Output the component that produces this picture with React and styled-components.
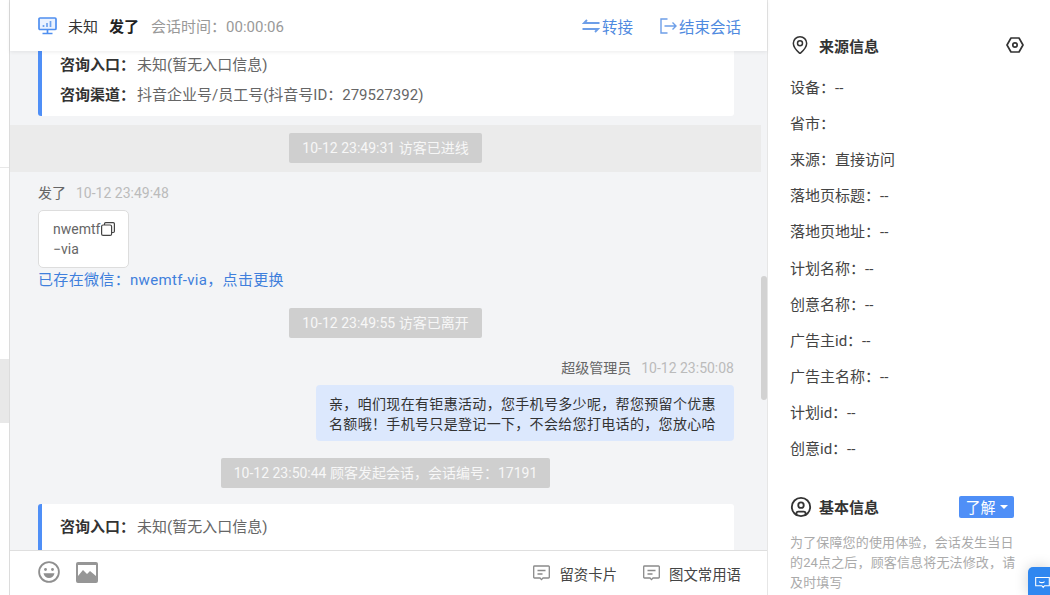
import React from "react";
import styled, { createGlobalStyle } from "styled-components";
import { MapPin, CircleUser } from "lucide-react";

const GlobalStyle = createGlobalStyle`
  html, body {
    margin: 0;
    padding: 0;
    background: #fff;
  }
  * {
    box-sizing: border-box;
  }
  body {
    font-family: Roboto, "Noto Sans CJK SC", sans-serif;
    color: #333;
  }
`;

const sourceRows = [
  "设备：--",
  "省市：",
  "来源：直接访问",
  "落地页标题：--",
  "落地页地址：--",
  "计划名称：--",
  "创意名称：--",
  "广告主id：--",
  "广告主名称：--",
  "计划id：--",
  "创意id：--",
];

const MonitorIcon = () => (
  <svg width="19" height="18" viewBox="0 0 19 18" fill="none">
    <rect x="1" y="1" width="17" height="11.5" rx="1" fill="#eaf2ff" stroke="#4f8ff0" strokeWidth="1.7" />
    <path d="M5.5 10V8M9 10V6M12.500 10V4" stroke="#6fa3ee" strokeWidth="1.7" />
    <path d="M9.5 13v3M4.5 16.500h10" stroke="#4f8ff0" strokeWidth="1.7" />
  </svg>
);

const SwapIcon = () => (
  <svg width="18" height="14" viewBox="0 0 18 14" fill="none" stroke="#6d9ee8" strokeWidth="1.9">
    <path d="M17.500 4H2L5 1" />
    <path d="M.5 10H16L13 13" />
  </svg>
);

const ExitIcon = () => (
  <svg width="17" height="16" viewBox="0 0 17 16" fill="none" stroke="#6d9ee8" strokeWidth="1.4">
    <path d="M7.500 1H1v14h6.500" />
    <path d="M4.500 8H16M12.500 4.500 16 8l-3.500 3.500" />
  </svg>
);

const HexIcon = () => (
  <svg width="18" height="16" viewBox="0 0 18 16" fill="none" stroke="#333" strokeWidth="1.7">
    <path d="M5 1h8l4 7-4 7H5L1 8z" strokeLinejoin="round" />
    <circle cx="9" cy="8" r="2.2" />
  </svg>
);

const SmileIcon = () => (
  <svg width="22" height="22" viewBox="0 0 22 22" fill="none">
    <circle cx="11" cy="11" r="9.900" stroke="#8f8f8f" strokeWidth="1.800" />
    <circle cx="7.500" cy="8.500" r="1.400" fill="#8f8f8f" />
    <circle cx="14.500" cy="8.500" r="1.400" fill="#8f8f8f" />
    <path d="M5.500 12.200h11c-.5 3-2.800 4.800-5.500 4.800s-5-1.800-5.500-4.800z" fill="#8f8f8f" />
  </svg>
);

const PictureIcon = () => (
  <svg width="22" height="21" viewBox="0 0 22 21">
    <path
      d="M2 0h18a2 2 0 0 1 2 2v17a2 2 0 0 1-2 2H2a2 2 0 0 1-2-2V2a2 2 0 0 1 2-2zm0 14 5-6 4 4 3-3 6 5V3H2z"
      fill="#969696"
      fillRule="evenodd"
    />
  </svg>
);

const CommentIcon = () => (
  <svg width="17" height="16" viewBox="0 0 17 16" fill="none" stroke="#8a8a8a" strokeWidth="1.300">
    <path d="M1.500 1h14a.8.8 0 0 1 .8.8v10.400a.8.8 0 0 1-.8.8H10l-1.500 1.600L7 13H1.500a.8.8 0 0 1-.8-.8V1.800a.8.8 0 0 1 .8-.8z" />
    <path d="M4.500 5.500h8M4.500 9h5" />
  </svg>
);

const CopyIcon = () => (
  <svg width="14" height="14" viewBox="0 0 14 14" fill="none" stroke="#444" strokeWidth="1.200">
    <rect x="0.600" y="3" width="10" height="10.400" rx="1.500" />
    <path d="M3.500 3V1.800A1.200 1.200 0 0 1 4.700.6h7.500a1.200 1.200 0 0 1 1.200 1.200v7.500a1.200 1.200 0 0 1-1.200 1.200h-1.600" />
  </svg>
);

const ChatIcon = () => (
  <svg width="22" height="18" viewBox="0 0 22 18" fill="none" stroke="#fff" strokeWidth="1.600">
    <path d="M1 1h20v12h-7l-2 2.500L10 13H1z" />
    <path d="M6 7c2 2 6 2 8 0" />
  </svg>
);

const Page = styled.div`
  position: relative;
  display: flex;
  width: 1050px;
  height: 595px;
  overflow: hidden;
  background: #fff;
`;

const LeftStrip = styled.div`
  flex: none;
  width: 10px;
  border-right: 1px solid #dcdcdc;
`;

const StripLine = styled.div`
  height: 168px;
  border-bottom: 1px solid #e8e8e8;
`;

const StripBlock = styled.div`
  height: 64px;
  margin-top: 191px;
  background: #e8e8e8;
`;

const Main = styled.div`
  flex: none;
  display: flex;
  flex-direction: column;
  width: 758px;
  height: 595px;
  border-right: 1px solid #e6e6e6;
`;

const Header = styled.header`
  position: relative;
  z-index: 2;
  flex: none;
  display: flex;
  align-items: center;
  justify-content: space-between;
  height: 51px;
  padding: 0 26px 0 28px;
  background: #fff;
  box-shadow: 0 1px 4px rgba(0, 0, 0, 0.08);
  font-size: 15px;
`;

const HeaderGroup = styled.div`
  display: flex;
  align-items: center;
`;

const Visitor = styled.span`
  margin-left: 11px;
  color: #333;
`;

const VisitorName = styled.b`
  margin-left: 11px;
  color: #222;
`;

const Duration = styled.span`
  margin-left: 12px;
  color: #999;
`;

const HeaderAction = styled.a`
  display: flex;
  align-items: center;
  gap: 2px;
  margin-left: 27px;
  font-size: 15.5px;
  color: #4f8ae0;
`;

const Body = styled.div`
  position: relative;
  flex: 1;
  min-height: 0;
  overflow: hidden;
  background: #f3f4f6;
`;

const Thread = styled.div`
  display: flex;
  flex-direction: column;
  width: 751px;
  margin-top: -9px;
`;

const InfoCard = styled.div`
  flex: none;
  margin: ${({ $gap }) => $gap}px 27px 0 28px;
  padding: 8px 0 ${({ $bottom }) => $bottom}px 18px;
  background: #fff;
  border-left: 4px solid #4f8ff7;
  border-radius: 3px;
`;

const InfoRow = styled.div`
  height: 30px;
  line-height: 30px;
  font-size: 15px;
  color: #666;

  b {
    margin-right: 2px;
    color: #333;
  }
`;

const Band = styled.div`
  display: flex;
  justify-content: center;
  align-items: flex-start;
  height: 47px;
  margin-top: 9px;
  padding-top: 8px;
  background: ${({ $shaded }) => ($shaded ? "#ebebeb" : "transparent")};
`;

const Chip = styled.div`
  height: 30px;
  line-height: 30px;
  padding: 0 13px;
  background: #cfcfcf;
  border-radius: 2px;
  font-size: 14px;
  color: #f7f7f7;
`;

const Meta = styled.div`
  display: flex;
  justify-content: ${({ $right }) => ($right ? "flex-end" : "flex-start")};
  gap: 10px;
  margin: 12px 27px 0 28px;
  line-height: 18px;
  font-size: 14px;
  color: #666;

  span {
    color: #bbb;
  }
`;

const WechatCard = styled.div`
  position: relative;
  width: 91px;
  height: 58px;
  margin: 8px 0 0 28px;
  padding: 9px 0 0 14px;
  background: #fff;
  border: 1px solid #ddd;
  border-radius: 5px;
  font-size: 14px;
  line-height: 19.5px;
  color: #666;
`;

const CopyMark = styled.span`
  position: absolute;
  top: 11px;
  left: 62px;
  line-height: 0;
`;

const WechatLink = styled.a`
  margin: 2px 0 0 28px;
  line-height: 21px;
  font-size: 15px;
  letter-spacing: 0.33px;
  color: #3f7fdc;
`;

const BubbleRow = styled.div`
  display: flex;
  justify-content: flex-end;
  margin: 8px 27px 0 0;
`;

const Bubble = styled.div`
  width: 418px;
  height: 56px;
  padding: 10px 0 0 13px;
  background: #dce8fd;
  border-radius: 4px;
  font-size: 14px;
  line-height: 19.5px;
  letter-spacing: 0.33px;
  color: #333;
`;

const ScrollThumb = styled.div`
  position: absolute;
  top: 225px;
  right: 0;
  width: 6px;
  height: 124px;
  background: #d2d2d2;
  border-radius: 3px;
`;

const Footer = styled.footer`
  flex: none;
  display: flex;
  align-items: center;
  justify-content: space-between;
  height: 45px;
  padding: 0 26px 2px 28px;
  background: #fff;
  border-top: 1px solid #dfdfdf;
`;

const FooterIcons = styled.div`
  display: flex;
  align-items: center;
  gap: 16px;
  line-height: 0;
`;

const FooterTools = styled.div`
  display: flex;
  gap: 26px;
  padding-top: 2px;
`;

const FooterTool = styled.a`
  display: flex;
  align-items: center;
  gap: 9px;
  font-size: 14.4px;
  color: #444;
`;

const Side = styled.aside`
  flex: 1;
  min-width: 0;
  padding: 29px 36px 0 22px;
  overflow: hidden;
`;

const SideTitleRow = styled.div`
  display: flex;
  align-items: center;
  height: 32px;
`;

const SideTitle = styled.b`
  flex: 1;
  margin-left: ${({ $gap }) => $gap}px;
  font-size: 15px;
  color: #333;
`;

const SettingsMark = styled.span`
  margin: -1px -10px 0 0;
  line-height: 0;
`;

const SourceList = styled.div`
  margin: 8.6px 0 23px;
`;

const SourceRow = styled.div`
  height: 36.2px;
  line-height: 36.2px;
  font-size: 15px;
  color: #444;
`;

const LearnButton = styled.button`
  display: flex;
  align-items: center;
  justify-content: center;
  gap: 4px;
  width: 55px;
  height: 22px;
  padding: 0;
  background: #4f8ff7;
  border: 0;
  border-radius: 2px;
  font: inherit;
  font-size: 15px;
  color: #fff;

  &::after {
    content: "";
    border-left: 4px solid transparent;
    border-right: 4px solid transparent;
    border-top: 4px solid #fff;
  }
`;

const Notice = styled.p`
  margin: 10px -4px 0 0;
  font-size: 13px;
  line-height: 20px;
  letter-spacing: 0.15px;
  color: #aaa;
`;

const ChatFab = styled.div`
  position: absolute;
  right: 0;
  bottom: 0;
  display: flex;
  align-items: center;
  width: 22px;
  height: 28px;
  padding: 4px 0 0 7px;
  overflow: hidden;
  background: #2f87f0;
  border-top-left-radius: 5px;
  box-shadow: 0 0 14px rgba(0, 0, 0, 0.18);
`;

const App = () => (
  <Page>
    <GlobalStyle />
    <LeftStrip>
      <StripLine />
      <StripBlock />
    </LeftStrip>
    <Main>
      <Header>
        <HeaderGroup>
          <MonitorIcon />
          <Visitor>未知</Visitor>
          <VisitorName>发了</VisitorName>
          <Duration>会话时间：00:00:06</Duration>
        </HeaderGroup>
        <HeaderGroup>
          <HeaderAction>
            <SwapIcon />
            转接
          </HeaderAction>
          <HeaderAction>
            <ExitIcon />
            结束会话
          </HeaderAction>
        </HeaderGroup>
      </Header>
      <Body>
        <Thread>
          <InfoCard $gap={0} $bottom={6}>
            <InfoRow>
              <b>咨询入口：</b>未知(暂无入口信息)
            </InfoRow>
            <InfoRow>
              <b>咨询渠道：</b>抖音企业号/员工号(抖音号ID：279527392)
            </InfoRow>
          </InfoCard>
          <Band $shaded>
            <Chip>10-12 23:49:31 访客已进线</Chip>
          </Band>
          <Meta>
            发了 <span>10-12 23:49:48</span>
          </Meta>
          <WechatCard>
            nwemtf
            <CopyMark>
              <CopyIcon />
            </CopyMark>
            <br />
            −via
          </WechatCard>
          <WechatLink>已存在微信：nwemtf-via，点击更换</WechatLink>
          <Band>
            <Chip>10-12 23:49:55 访客已离开</Chip>
          </Band>
          <Meta $right>
            超级管理员 <span>10-12 23:50:08</span>
          </Meta>
          <BubbleRow>
            <Bubble>
              亲，咱们现在有钜惠活动，您手机号多少呢，帮您预留个优惠
              名额哦！手机号只是登记一下，不会给您打电话的，您放心哈
            </Bubble>
          </BubbleRow>
          <Band>
            <Chip>10-12 23:50:44 顾客发起会话，会话编号：17191</Chip>
          </Band>
          <InfoCard $gap={7} $bottom={20}>
            <InfoRow>
              <b>咨询入口：</b>未知(暂无入口信息)
            </InfoRow>
          </InfoCard>
        </Thread>
        <ScrollThumb />
      </Body>
      <Footer>
        <FooterIcons>
          <SmileIcon />
          <PictureIcon />
        </FooterIcons>
        <FooterTools>
          <FooterTool>
            <CommentIcon />
            留资卡片
          </FooterTool>
          <FooterTool>
            <CommentIcon />
            图文常用语
          </FooterTool>
        </FooterTools>
      </Footer>
    </Main>
    <Side>
      <SideTitleRow>
        <MapPin size={20} strokeWidth={1.8} color="#333" />
        <SideTitle $gap={9}>来源信息</SideTitle>
        <SettingsMark>
          <HexIcon />
        </SettingsMark>
      </SideTitleRow>
      <SourceList>
        {sourceRows.map((row) => (
          <SourceRow key={row}>{row}</SourceRow>
        ))}
      </SourceList>
      <SideTitleRow>
        <CircleUser size={22} strokeWidth={2} color="#333" />
        <SideTitle $gap={7}>基本信息</SideTitle>
        <LearnButton>了解</LearnButton>
      </SideTitleRow>
      <Notice>为了保障您的使用体验，会话发生当日的24点之后，顾客信息将无法修改，请及时填写</Notice>
    </Side>
    <ChatFab>
      <ChatIcon />
    </ChatFab>
  </Page>
);

export default App;
